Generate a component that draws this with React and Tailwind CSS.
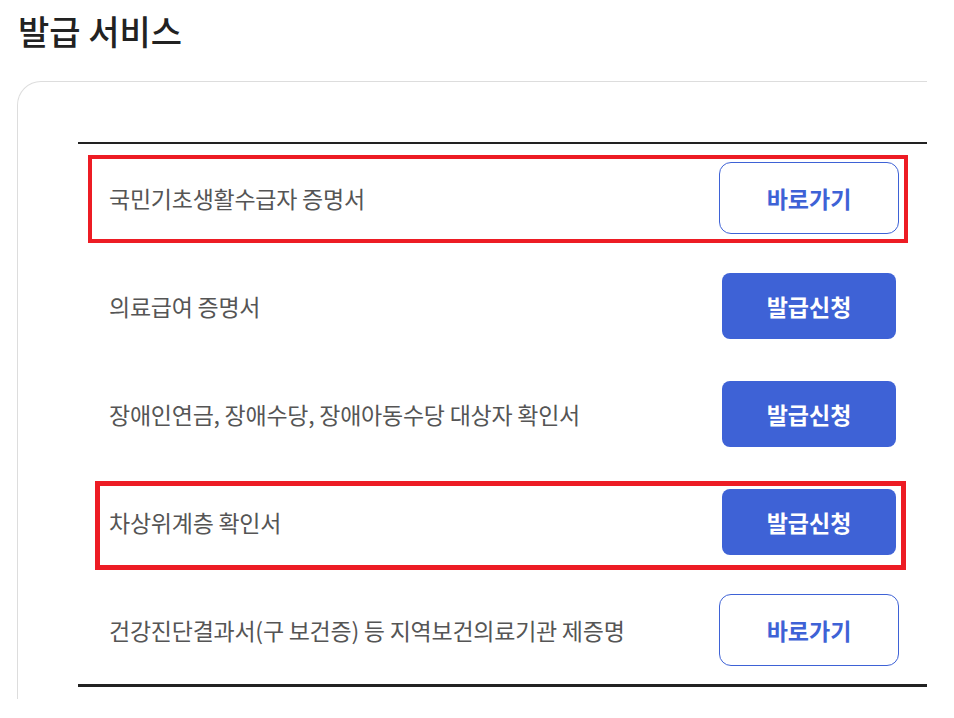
const rows = [
  { title: "국민기초생활수급자 증명서", type: "link", mark: "a" },
  { title: "의료급여 증명서", type: "apply" },
  { title: "장애인연금, 장애수당, 장애아동수당 대상자 확인서", type: "apply" },
  { title: "차상위계층 확인서", type: "apply", mark: "b" },
  { title: "건강진단결과서(구 보건증) 등 지역보건의료기관 제증명", type: "link" },
];

const font = {
  fontFamily: '"Noto Sans CJK KR", "Noto Sans", sans-serif',
};

const App = () => {
  return (
    <div className="w-[954px] h-[718px] bg-white overflow-hidden" style={font}>
      <div className="pl-[18px] pt-[9px]">
        <h2 className="text-[34px] leading-[44px] font-medium text-[#222]">
          발급 서비스
        </h2>
      </div>
      <div className="mt-[28px] ml-[17px] w-[910px] h-[618px] border-t border-l border-[#dddddd] rounded-tl-[24px] pl-[60px] pt-[60px]">
        <ul className="border-t-2 border-b-[3px] border-[#222]">
          {rows.map((row, i) => (
            <li key={i} className="relative h-[108px] flex items-center">
              <p className="flex-1 pl-[31px] text-[23px] text-[#555] tracking-[-0.25px]">
                {row.title}
              </p>
              <div className="w-[180px] mr-[28px] flex justify-center">
                {row.type === "link" ? (
                  <button className="w-[180px] h-[72px] rounded-[12px] border border-[#3e62d6] bg-white text-[23px] font-bold text-[#3e62d6]">
                    바로가기
                  </button>
                ) : (
                  <button className="w-[174px] h-[66px] rounded-[8px] bg-[#3e62d6] text-[23px] font-bold text-white">
                    발급신청
                  </button>
                )}
              </div>
              {row.mark === "a" && (
                <div className="absolute left-[10px] top-[11px] w-[820px] h-[88px] border-4 border-[#ed1c24]" />
              )}
              {row.mark === "b" && (
                <div className="absolute left-[17px] top-[13px] w-[811px] h-[89px] border-[5px] border-[#ed1c24]" />
              )}
            </li>
          ))}
        </ul>
      </div>
    </div>
  );
};

export default App;
